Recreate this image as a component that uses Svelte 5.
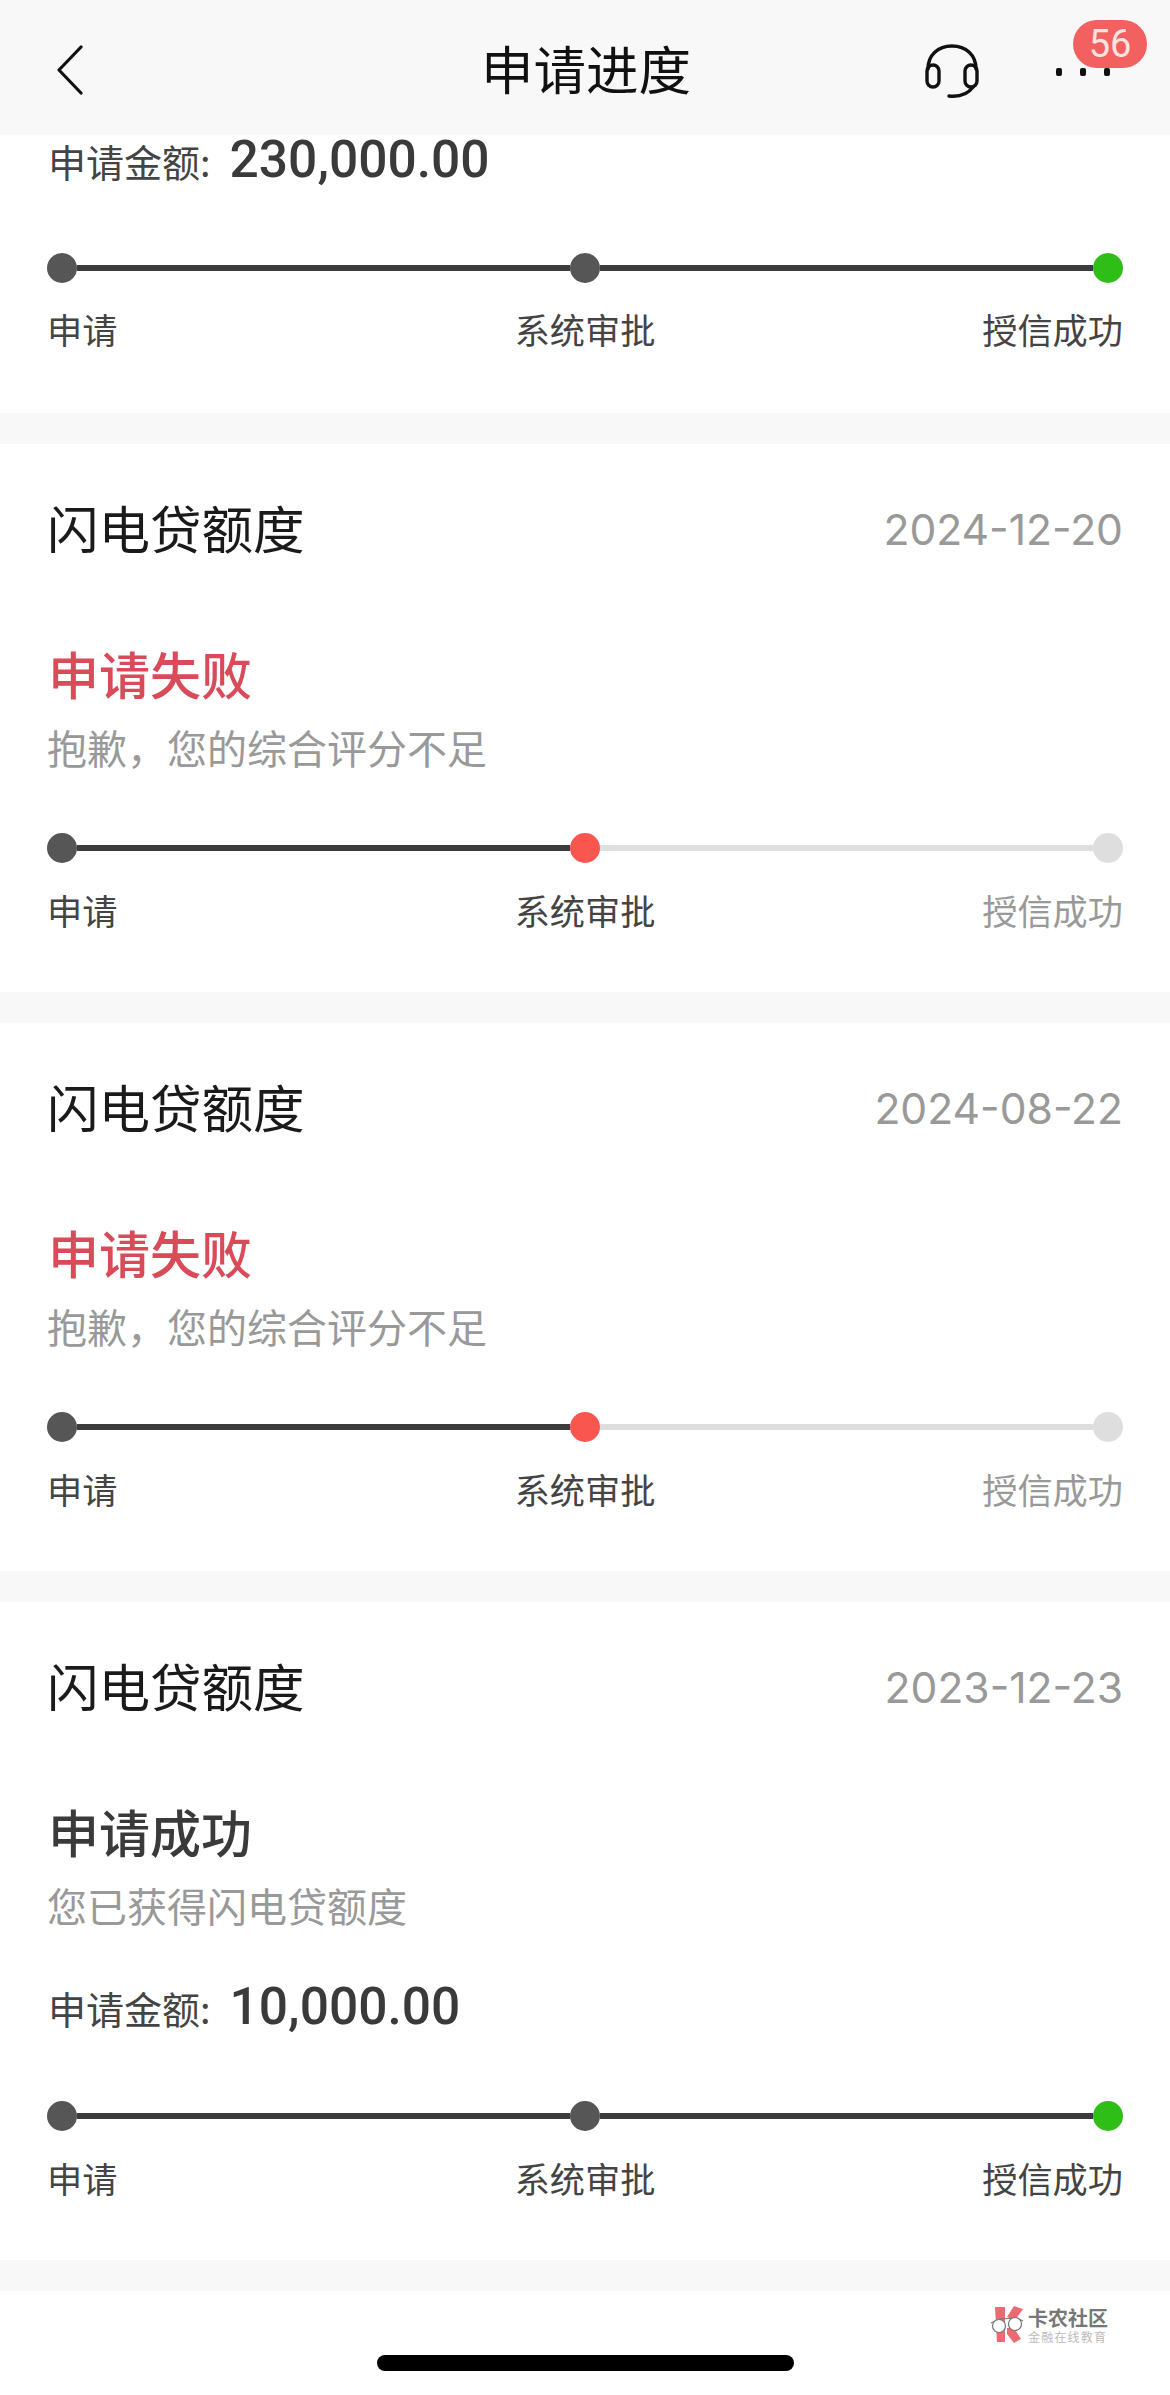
<script>
  const done = { dots: ['dark', 'dark', 'green'], lines: ['dark', 'dark'], labels: ['', '', ''] };
  const failed = { dots: ['dark', 'red', 'light'], lines: ['dark', 'light'], labels: ['', '', 'muted'] };
  const sorry = '抱歉\uFF0C您的综合评分不足';
  const cards = [
    { date: '2024-12-20', status: '申请失败', fail: true, sub: sorry, p: failed },
    { date: '2024-08-22', status: '申请失败', fail: true, sub: sorry, p: failed },
    { date: '2023-12-23', status: '申请成功', fail: false, sub: '您已获得闪电贷额度', amount: '10,000.00', p: done }
  ];
  const steps = ['申请', '系统审批', '授信成功'];
</script>

{#snippet progress(p)}
  <div class="track">
    <span class="dot {p.dots[0]}"></span>
    <span class="line {p.lines[0]}"></span>
    <span class="dot {p.dots[1]}"></span>
    <span class="line {p.lines[1]}"></span>
    <span class="dot {p.dots[2]}"></span>
  </div>
  <div class="labels">
    {#each steps as s, i}
      <span class="label {p.labels[i]}">{s}</span>
    {/each}
  </div>
{/snippet}

<div class="page">
  <header class="head">
    <div class="back">
      <svg width="28" height="50" viewBox="0 0 28 50" fill="none" stroke="#111" stroke-width="3.2" stroke-linecap="round" stroke-linejoin="round"><path d="M25 2 3 25l22 23"/></svg>
    </div>
    <h1>申请进度</h1>
    <div class="tools">
      <svg class="headset" width="54" height="54" viewBox="0 0 54 54" fill="none" stroke="#111" stroke-width="3.4" stroke-linecap="round"><path d="M3 25C3 11 13 2 27 2s24 9 24 23"/><rect x="2" y="21" width="12" height="22" rx="6"/><rect x="40" y="21" width="12" height="22" rx="6"/><path d="M24 52c10 1 19-2 24-9"/></svg>
      <div class="more"><i></i><i></i><i></i><span class="badge">56</span></div>
    </div>
  </header>

  <section class="card first">
    <div class="amount top"><span>申请金额:</span><b>230,000.00</b></div>
    {@render progress(done)}
  </section>

  {#each cards as c}
    <section class="card">
      <div class="row">
        <span class="title">闪电贷额度</span>
        <span class="date">{c.date}</span>
      </div>
      <div class="status" class:fail={c.fail}>{c.status}</div>
      <div class="sub">{c.sub}</div>
      {#if c.amount}
        <div class="amount"><span>申请金额:</span><b>{c.amount}</b></div>
      {/if}
      {@render progress(c.p)}
    </section>
  {/each}

  <div class="mark">
    <svg width="38" height="38" viewBox="0 0 38 38"><path d="M5 1h10v35H7z" fill="#ee6a72"/><path d="M17 11 24 0l9 3-8 11z" fill="#ee6a72"/><path d="M17 22h7l7 11-7 4-7-9z" fill="#ee6a72"/><path d="M1 17 10 13l17-1 6 3" fill="none" stroke="#777" stroke-width="1.2"/><circle cx="9" cy="20" r="6.5" fill="#fff" stroke="#777" stroke-width="1.2"/><circle cx="25" cy="18" r="6.5" fill="#fff" stroke="#777" stroke-width="1.2"/></svg>
    <div class="mark-text"><strong>卡农社区</strong><small>金融在线教育</small></div>
  </div>
  <div class="home"></div>
</div>

<style>
  :global(body) { margin: 0; background: #fff; }
  .page {
    position: relative;
    width: 1170px;
    height: 2395px;
    overflow: hidden;
    background: #fff;
    font-family: "Noto Sans CJK SC", "Noto Sans", sans-serif;
    color: #333;
  }
  .head {
    height: 135px;
    background: #f8f8f8;
    display: grid;
    grid-template-columns: 1fr auto 1fr;
    align-items: center;
    box-sizing: border-box;
    padding: 0 23px;
  }
  .back { display: flex; margin-left: 33px; position: relative; top: 2px; }
  h1 {
    margin: 0;
    font-size: 52.5px;
    line-height: 60px;
    font-weight: 400;
    color: #111;
    position: relative;
    left: 1px;
    top: -1px;
  }
  .tools { display: flex; justify-content: flex-end; align-items: center; }
  .headset { margin-right: 44px; position: relative; top: 3px; }
  .more { position: relative; display: flex; gap: 18px; width: 124px; box-sizing: border-box; padding: 8px 0 0 33px; }
  .more i { width: 6px; height: 8px; border-radius: 2px; background: #111; }
  .badge {
    position: absolute;
    left: 50px;
    top: -40px;
    width: 74px;
    height: 48px;
    border-radius: 24px;
    background: #f26060;
    color: #fbe3e1;
    font: 400 38px/48px "Roboto", sans-serif;
    text-align: center;
  }
  .card {
    padding: 53px 47px 57px;
    border-bottom: 31px solid #f8f8f8;
  }
  .card.first { padding-top: 0; padding-bottom: 59px; }
  .first .track { margin-top: 68px; }
  .first .labels { margin-top: 21px; }
  .row { display: flex; justify-content: space-between; align-items: center; height: 60px; }
  .title { font-size: 51.5px; line-height: 60px; color: #1a1a1a; }
  .date { font: 400 42.6px/60px "Inter", sans-serif; color: #999; position: relative; top: 3px; }
  .status {
    margin: 86px 0 0 1px;
    font-size: 51px;
    line-height: 60px;
    font-weight: 500;
    color: #3a3a3a;
  }
  .status.fail { color: #d94b58; }
  .sub { margin-top: 19px; font-size: 40px; line-height: 50px; color: #999; }
  .amount { margin: 47px 0 0 1px; display: flex; align-items: center; gap: 19px; height: 60px; color: #444; font-size: 38px; }
  .amount.top { margin-top: 0; height: 50px; }
  .amount b { font: 500 51.5px/60px "Roboto", sans-serif; color: #3a3a3a; }
  .track { display: flex; align-items: center; height: 30px; margin-top: 64px; }
  .sub + .track { margin-top: 61px; }
  .dot { width: 30px; height: 30px; border-radius: 50%; flex: none; }
  .line { flex: 1; height: 6px; }
  .dot.dark { background: #565656; }
  .dot.green { background: #2fbd18; }
  .dot.red { background: #f8564e; }
  .dot.light { background: #dedede; }
  .line.dark { background: #3c3c3c; }
  .line.light { background: #dedede; }
  .labels { display: grid; grid-template-columns: 1fr auto 1fr; margin-top: 22px; }
  .label { font-size: 35.2px; line-height: 50px; color: #444; }
  .label:last-child { justify-self: end; }
  .label.muted { color: #999; }
  .mark { position: absolute; left: 990px; top: 2306px; display: flex; align-items: center; gap: 0; }
  .mark-text { display: flex; flex-direction: column; }
  .mark strong { font-size: 20px; line-height: 24px; font-weight: 700; color: #777; }
  .mark small { font-size: 12px; line-height: 14px; letter-spacing: 1.2px; color: #bbb; }
  .home { position: absolute; left: 377px; top: 2355px; width: 417px; height: 16px; border-radius: 8px; background: #000; }
</style>
